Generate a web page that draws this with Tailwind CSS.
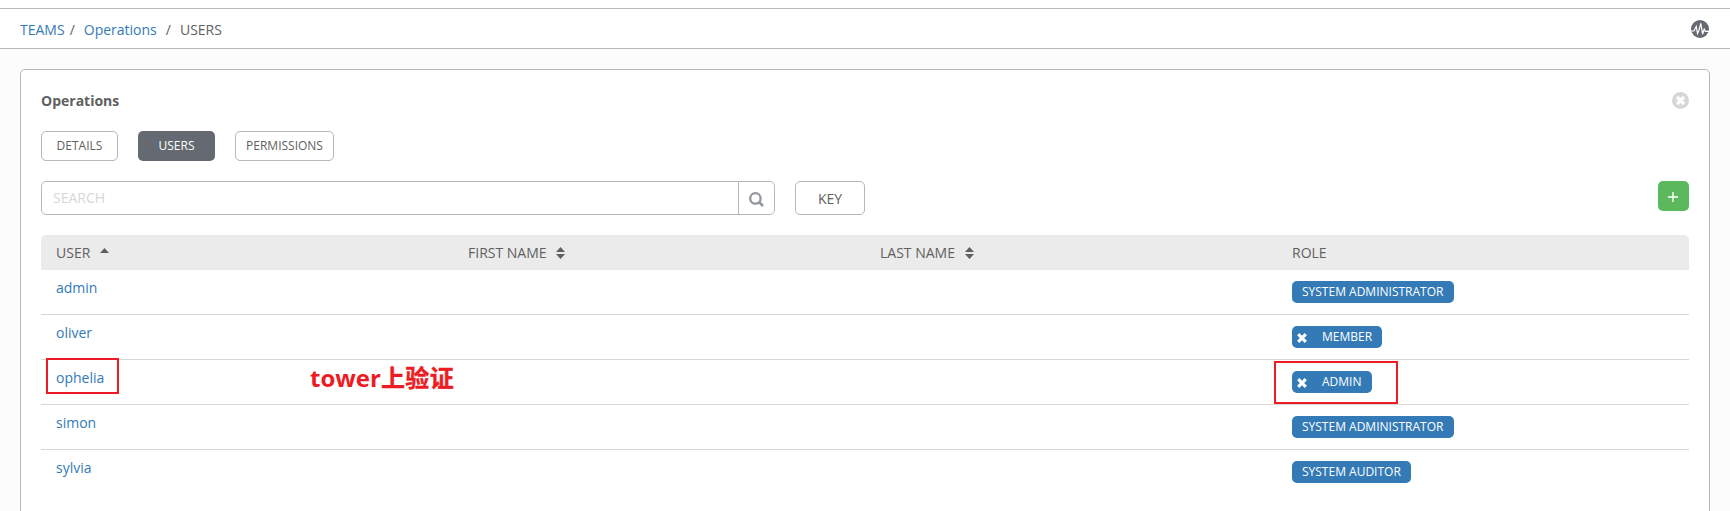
<!DOCTYPE html>
<html lang="en">
<head>
<meta charset="utf-8">
<title>Teams / Operations / Users</title>
<script src="https://cdn.jsdelivr.net/npm/@tailwindcss/browser@4"></script>
</head>
<body class="h-[511px] overflow-hidden bg-[#fcfcfc] font-['Open_Sans','Noto_Sans_CJK_SC',sans-serif] text-sm leading-5 text-[#606060]">
<svg class="hidden">
  <symbol id="times" viewBox="0 0 9 9"><path d="M1.1 1.1 7.9 7.9M7.9 1.1 1.1 7.9" stroke="currentColor" stroke-width="2.8" fill="none"/></symbol>
  <symbol id="sort" viewBox="0 0 9 12"><path d="M0 5 4.5 0 9 5ZM0 7 4.5 12 9 7Z" fill="currentColor"/></symbol>
</svg>
<div class="h-2 bg-white"></div>
<header class="flex h-[41px] items-center justify-between border-y border-[#b7b7b7] bg-white pr-[21px] pl-5">
  <nav class="flex pt-[2px] whitespace-pre text-[#606060]">
    <a class="text-[#337ab7]">TEAMS</a><span class="ml-[5px]">/</span><a class="ml-[9px] text-[#337ab7]">Operations</a><span class="ml-[9px]">/</span><span class="ml-[9px]">USERS</span>
  </nav>
  <svg class="mt-px size-[18px]" viewBox="0 0 18 18"><circle cx="9" cy="9" r="9" fill="#646972"/><path d="M0 11H3L4.4 8 5.3 6.4 6.5 13.4 8 10.2 9.8 3.4 11.6 14.2 13.2 9 14.4 11.4H18" fill="none" stroke="#fff" stroke-width="1.2"/></svg>
</header>
<main class="mx-5 mt-5 h-[460px] rounded-[5px] border border-[#b7b7b7] bg-white px-5 pt-[21px]">
  <div class="flex h-5 items-start justify-between">
    <h1 class="font-bold">Operations</h1>
    <svg class="mt-px size-[17px]" viewBox="0 0 17 17"><circle cx="8.5" cy="8.5" r="8.5" fill="#d7d7d7"/><path d="M5 5 12 12M12 5 5 12" stroke="#fff" stroke-width="3.2"/></svg>
  </div>
  <div class="mt-5 flex gap-5 text-xs">
    <button class="h-[30px] w-[77px] rounded-[5px] border border-[#b7b7b7]">DETAILS</button>
    <button class="h-[30px] w-[77px] rounded-[5px] bg-[#646972] text-white">USERS</button>
    <button class="h-[30px] w-[99px] rounded-[5px] border border-[#b7b7b7]">PERMISSIONS</button>
  </div>
  <div class="mt-5 flex h-[34px] items-start">
    <div class="flex h-[34px] w-[734px] rounded-[5px] border border-[#b7b7b7]">
      <div class="flex-1 pt-[6px] pl-[11px] text-[#d7d7d7]">SEARCH</div>
      <div class="flex w-9 items-center justify-center border-l border-[#b7b7b7]">
        <svg class="mt-[3px] size-[15px]" viewBox="0 0 15 15" fill="none" stroke="#92969e"><circle cx="6.4" cy="6.4" r="5.2" stroke-width="2.3"/><path d="M10 10 14 14" stroke-width="2.6"/></svg>
      </div>
    </div>
    <button class="ml-5 h-[34px] w-[70px] rounded-[5px] border border-[#b7b7b7]"><span class="relative top-px">KEY</span></button>
    <button class="ml-auto flex h-[30px] w-[31px] items-center justify-center rounded-[5px] bg-[#5cb85c]"><svg class="mt-[2px] mr-px size-[10px]" viewBox="0 0 10 10"><path d="M5 0V10M0 5H10" stroke="#fff" stroke-width="1.4"/></svg></button>
  </div>
  <div class="mt-5 grid h-[35px] grid-cols-4 items-center rounded-t-[5px] bg-[#ebebeb]">
    <div class="flex pl-[15px]">USER<svg class="mt-[5px] ml-[10px] h-[5px] w-[9px]" viewBox="0 0 9 5"><path d="M0 5 4.5 0 9 5Z" fill="#606060"/></svg></div>
    <div class="flex items-center pl-[15px]">FIRST NAME<svg class="ml-[9px] h-3 w-[9px]"><use href="#sort"/></svg></div>
    <div class="flex items-center pl-[15px]">LAST NAME<svg class="ml-[10px] h-3 w-[9px]"><use href="#sort"/></svg></div>
    <div class="pl-[15px]">ROLE</div>
  </div>
  <div class="grid h-[45px] grid-cols-4 border-b border-[#d7d7d7]">
    <a class="pt-2 pl-[15px] text-[#337ab7]">admin</a>
    <div class="col-start-4 pt-[11px] pl-[15px]"><span class="flex h-[22px] w-[162px] items-center rounded-[5px] bg-[#337ab7] pl-[10px] text-xs text-white">SYSTEM ADMINISTRATOR</span></div>
  </div>
  <div class="grid h-[45px] grid-cols-4 border-b border-[#d7d7d7]">
    <a class="pt-2 pl-[15px] text-[#337ab7]">oliver</a>
    <div class="col-start-4 pt-[11px] pl-[15px]"><span class="flex h-[22px] w-[90px] items-center rounded-[5px] bg-[#337ab7] pl-[5px] text-xs text-white"><svg class="mt-[2px] mr-[15px] size-[10px]"><use href="#times"/></svg>MEMBER</span></div>
  </div>
  <div class="relative grid h-[45px] grid-cols-4 border-b border-[#d7d7d7]">
    <a class="pt-2 pl-[15px] text-[#337ab7]">ophelia</a>
    <div class="col-start-4 pt-[11px] pl-[15px]"><span class="flex h-[22px] w-[80px] items-center rounded-[5px] bg-[#337ab7] pl-[5px] text-xs text-white"><svg class="mt-[2px] mr-[15px] size-[10px]"><use href="#times"/></svg>ADMIN</span></div>
    <div class="absolute -top-[2px] left-[5px] h-9 w-[73px] border-2 border-[#ed1c24]"></div>
    <div class="absolute top-px left-[1233px] h-[43px] w-[124px] border-2 border-[#ed1c24]"></div>
    <div class="absolute top-0 left-[269px] text-2xl leading-9 font-bold whitespace-nowrap text-[#ed1c24]">tower<span class="tracking-[0.4px] [-webkit-text-stroke:0.4px_#ed1c24]">上验证</span></div>
  </div>
  <div class="grid h-[45px] grid-cols-4 border-b border-[#d7d7d7]">
    <a class="pt-2 pl-[15px] text-[#337ab7]">simon</a>
    <div class="col-start-4 pt-[11px] pl-[15px]"><span class="flex h-[22px] w-[162px] items-center rounded-[5px] bg-[#337ab7] pl-[10px] text-xs text-white">SYSTEM ADMINISTRATOR</span></div>
  </div>
  <div class="grid h-[45px] grid-cols-4">
    <a class="pt-2 pl-[15px] text-[#337ab7]">sylvia</a>
    <div class="col-start-4 pt-[11px] pl-[15px]"><span class="flex h-[22px] w-[119px] items-center rounded-[5px] bg-[#337ab7] pl-[10px] text-xs text-white">SYSTEM AUDITOR</span></div>
  </div>
</main>
</body>
</html>
